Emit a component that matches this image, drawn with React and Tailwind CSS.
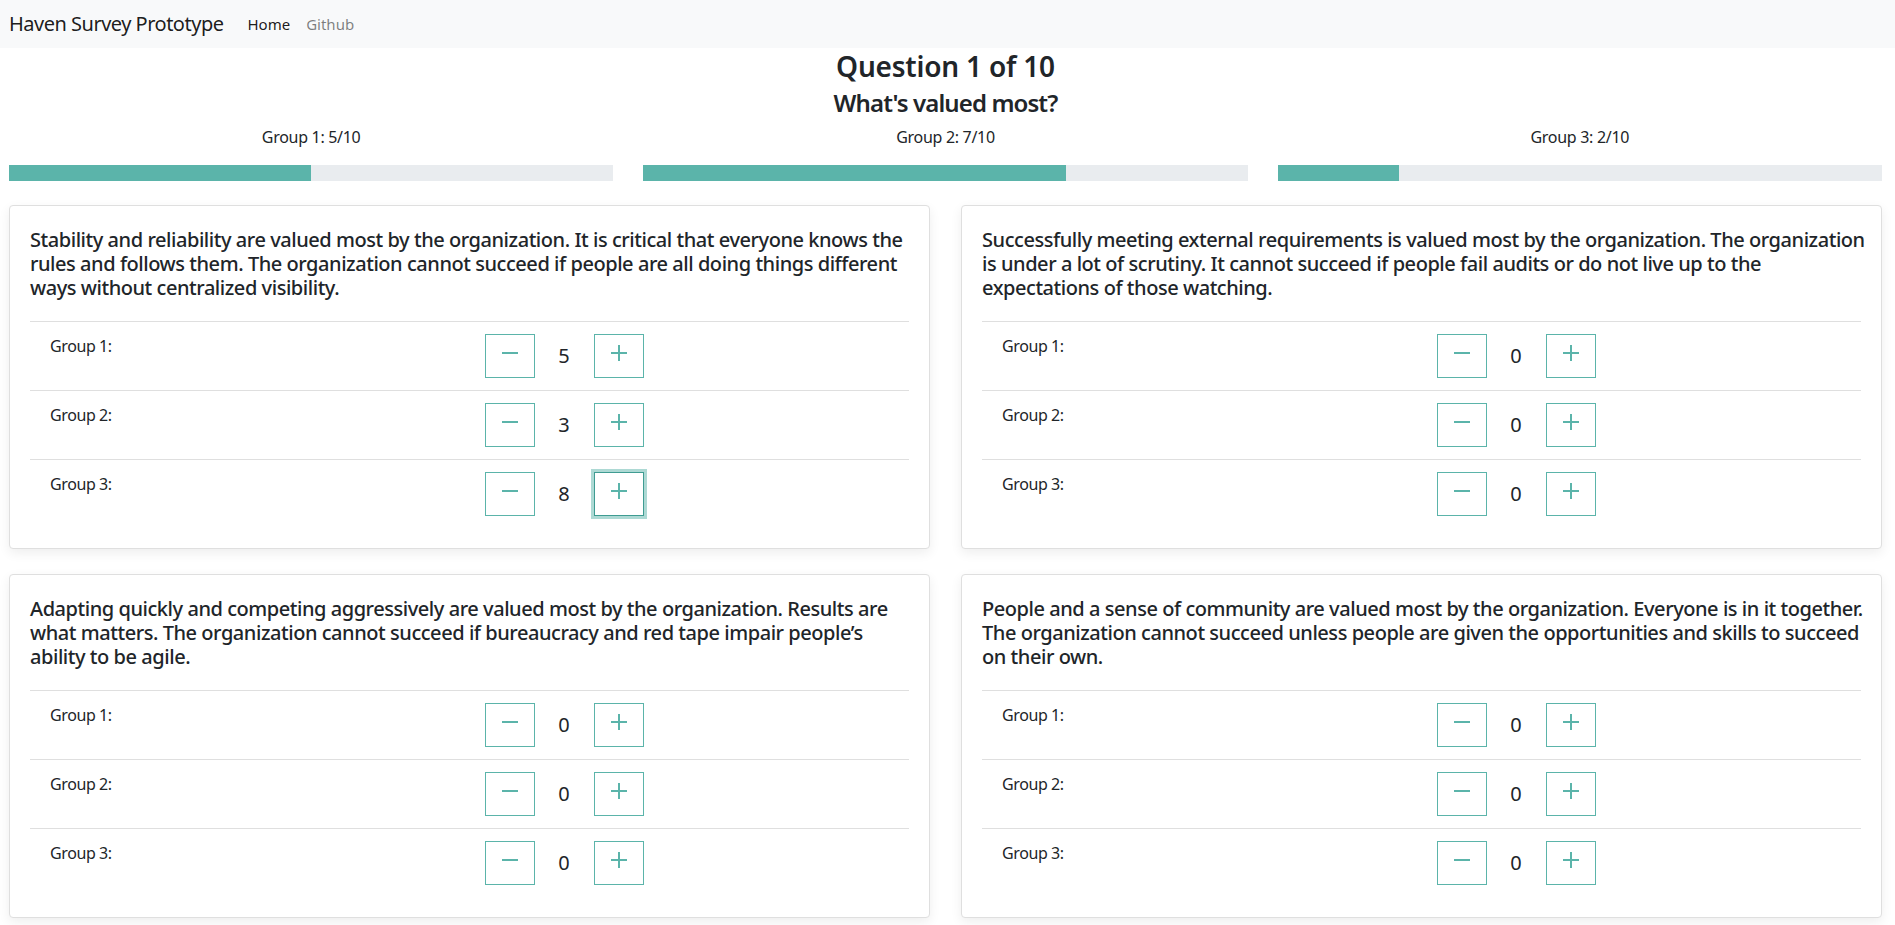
import React from "react";

const TEAL = "#5bb4aa";

const bars = [
  { label: "Group 1: 5/10", pct: 50 },
  { label: "Group 2: 7/10", pct: 70 },
  { label: "Group 3: 2/10", pct: 20 },
];

const cards = [
  {
    lines: [
      "Stability and reliability are valued most by the organization. It is critical that everyone knows the",
      "rules and follows them. The organization cannot succeed if people are all doing things different",
      "ways without centralized visibility.",
    ],
    values: [5, 3, 8],
    focus: 2,
  },
  {
    lines: [
      "Successfully meeting external requirements is valued most by the organization. The organization",
      "is under a lot of scrutiny. It cannot succeed if people fail audits or do not live up to the",
      "expectations of those watching.",
    ],
    values: [0, 0, 0],
  },
  {
    lines: [
      "Adapting quickly and competing aggressively are valued most by the organization. Results are",
      "what matters. The organization cannot succeed if bureaucracy and red tape impair people’s",
      "ability to be agile.",
    ],
    values: [0, 0, 0],
  },
  {
    lines: [
      "People and a sense of community are valued most by the organization. Everyone is in it together.",
      "The organization cannot succeed unless people are given the opportunities and skills to succeed",
      "on their own.",
    ],
    values: [0, 0, 0],
  },
];

function MinusIcon() {
  return (
    <svg width="16" height="16" viewBox="0 0 16 16" className="mb-[6px]">
      <line x1="0" y1="8" x2="16" y2="8" stroke={TEAL} strokeWidth="2" />
    </svg>
  );
}

function PlusIcon() {
  return (
    <svg width="16" height="16" viewBox="0 0 16 16" className="mb-[6px]">
      <line x1="0" y1="8" x2="16" y2="8" stroke={TEAL} strokeWidth="2" />
      <line x1="8" y1="0" x2="8" y2="16" stroke={TEAL} strokeWidth="2" />
    </svg>
  );
}

function Row({ label, value, focus }) {
  return (
    <div className="border-t border-[#dfdfdf] py-[12px] px-[5px]">
      <div className="grid grid-cols-2">
        <div className="pl-[15px] text-[16px] leading-[24px] tracking-[-0.4px] text-[#212529]">{label}</div>
        <div className="pl-[15px] flex items-center">
          <button className="w-[50px] h-[44px] border border-[#5bb4aa] bg-white flex items-center justify-center">
            <MinusIcon />
          </button>
          <span className="w-[59px] text-center text-[20px] leading-[24px] text-[#212529]">{value}</span>
          <button
            className={
              focus
                ? "w-[50px] h-[44px] border border-[#3f9c92] bg-white flex items-center justify-center shadow-[0_0_0_3px_rgba(91,180,170,0.5)]"
                : "w-[50px] h-[44px] border border-[#5bb4aa] bg-white flex items-center justify-center"
            }
          >
            <PlusIcon />
          </button>
        </div>
      </div>
    </div>
  );
}

function Card({ lines, values, focus }) {
  return (
    <div className="border border-[#dfdfdf] rounded-[4px] bg-white p-[20px] shadow-[0_4px_12px_rgba(0,0,0,0.07)]">
      <p className="pt-[2px] text-[20px] leading-[24px] tracking-[-0.45px] font-medium text-[#212529] mb-[21px]">
        {lines.map((l, i) => (
          <span key={i} className="block whitespace-nowrap">
            {l}
          </span>
        ))}
      </p>
      <div>
        {values.map((v, i) => (
          <Row key={i} label={`Group ${i + 1}:`} value={v} focus={focus === i} />
        ))}
      </div>
    </div>
  );
}

export default function App() {
  return (
    <div
      className="min-h-[925px] bg-white text-[#212529]"
      style={{ fontFamily: '"Noto Sans", "Open Sans", sans-serif' }}
    >
      <nav className="h-[48px] bg-[#f8f9fa] flex items-center px-[9px]">
        <span className="text-[20px] tracking-[-0.5px] text-[rgba(0,0,0,0.9)] mr-[16px]">Haven Survey Prototype</span>
        <a className="px-[8px] text-[15px] text-[rgba(0,0,0,0.9)]">Home</a>
        <a className="px-[8px] text-[15px] text-[rgba(0,0,0,0.5)]">Github</a>
      </nav>
      <div className="pl-[9px] pr-[13px]">
        <h3 className="mt-[2px] text-center text-[28px] leading-[1.2] font-semibold tracking-[-0.2px]">Question 1 of 10</h3>
        <h4 className="mt-[5px] text-center text-[24px] leading-[1.2] font-semibold tracking-[-0.9px]">What's valued most?</h4>
        <div className="mt-[8px] grid grid-cols-3 gap-x-[30px]">
          {bars.map((b) => (
            <div key={b.label}>
              <div className="text-center text-[16px] leading-[24px] tracking-[-0.3px]">{b.label}</div>
              <div className="mt-[16px] h-[16px] bg-[#e9ecef] flex">
                <div className="h-full bg-[#5bb4aa]" style={{ width: `${b.pct}%` }} />
              </div>
            </div>
          ))}
        </div>
        <div className="mt-[24px] grid grid-cols-2 gap-x-[31px] gap-y-[25px]">
          {cards.map((c, i) => (
            <Card key={i} {...c} />
          ))}
        </div>
      </div>
    </div>
  );
}
